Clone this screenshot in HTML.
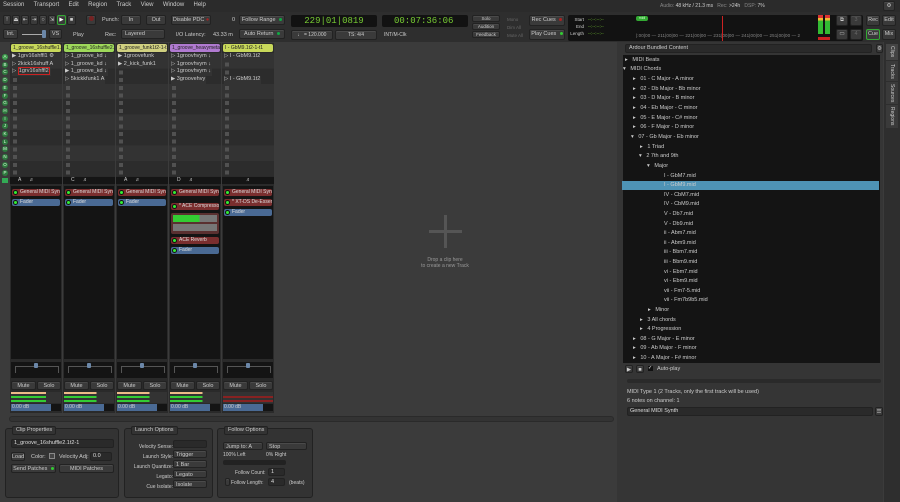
<!DOCTYPE html>
<html><head><meta charset="utf-8"><style>
*{margin:0;padding:0;box-sizing:border-box}
body{width:900px;height:502px;background:#3b3b3b;font-family:"Liberation Sans","DejaVu Sans",sans-serif;font-size:6px;color:#ccc;position:relative;overflow:hidden}
.a{position:absolute}
.btn{position:absolute;background:#3a3a3a;border:1px solid #222;border-radius:2px;color:#ccc;text-align:center;font-size:5.5px;line-height:8px;box-shadow:inset 0 1px 0 #4a4a4a;white-space:nowrap}
.led{display:inline-block;width:3px;height:3px;border-radius:50%;background:#1a4;margin-left:2px}
.clk{position:absolute;background:#121212;border-radius:2px;color:#7c3;font-family:"Liberation Mono",monospace}
.strip{position:absolute;top:43px;width:52px;height:370px;background:#2a2a2a}
.nm{position:absolute;left:1px;top:1px;width:50px;height:8px;border-radius:2px;font-size:5px;line-height:8px;color:#222;padding-left:2px;white-space:nowrap;overflow:hidden}
.cues{position:absolute;left:0;top:10px;width:52px;height:123px;background:repeating-linear-gradient(#333 0 15.4px,#2c2c2c 15.4px 30.8px)}
.cues:before{content:"";position:absolute;left:3px;top:0;width:4px;height:123px;background:repeating-linear-gradient(transparent 0 2px,#5a5a5a 2px 6px,transparent 6px 7.7px);opacity:.8}
.cue{position:absolute;left:2px;height:7.7px;font-size:5.5px;line-height:7.7px;color:#ccc;white-space:nowrap;background:inherit;z-index:1;padding-right:1px}
.pb{position:absolute;left:1px;top:143px;width:50px;height:173px;background:#141414}
.plug{position:absolute;left:1px;width:48px;height:7px;border-radius:2px;font-size:5px;line-height:7px;color:#ddd;padding-left:8px;white-space:nowrap;overflow:hidden}
.plug:before{content:"";position:absolute;left:2px;top:2px;width:3px;height:3px;border-radius:50%;background:#3e3;box-shadow:0 0 0 1px #111}
.red{background:#7a2e2e}.blu{background:#4a6a94}
.tree div{position:absolute;font-size:5.5px;color:#ccc;white-space:nowrap;height:9.65px;line-height:9.65px}
.panel{position:absolute;top:428px;height:70px;border:1px solid #222;border-radius:3px;background:#333}
.ptl{position:absolute;top:-3px;left:6px;background:#333;border:1px solid #222;border-radius:2px;padding:0 3px;font-size:5.5px;line-height:7px}
.lbl{position:absolute;font-size:5.5px;color:#ccc;white-space:nowrap}
.fld{position:absolute;background:#2a2a2a;border:1px solid #222;border-radius:2px;font-size:5.5px;line-height:7px;padding-left:2px;color:#ddd}
.cl{position:absolute;left:2px;width:6px;height:6px;border-radius:50%;background:#2f7a3f;color:#dfd;font-size:4.5px;line-height:6px;text-align:center}
.pan{position:absolute;top:362px;width:50px;height:16px;background:#141414}
.pan:before{content:"";position:absolute;left:4px;top:4px;width:42px;height:6px;border:1px solid #555;border-bottom:none}
.pan:after{content:"";position:absolute;left:23px;top:1px;width:4px;height:5px;background:#6b87a8;border-radius:1px}
</style></head><body>

<!-- menubar -->
<div class="a" style="left:0;top:0;width:900px;height:12px;background:#2b2b2b"></div>
<div class="a" style="left:3px;top:2px;font-size:6px;color:#ccc;word-spacing:3px">Session &nbsp;Transport &nbsp;Edit &nbsp;Region &nbsp;Track &nbsp;View &nbsp;Window &nbsp;Help</div>
<div class="a" style="left:660px;top:3px;font-size:5px;color:#888">Audio: <span style="color:#ccc">48 kHz / 21.3 ms</span> &nbsp; Rec: <span style="color:#ccc">&gt;24h</span> &nbsp; DSP: <span style="color:#ccc">7%</span></div>
<div class="btn" style="left:883px;top:1px;width:12px;height:10px">⚙</div>

<!-- toolbar -->
<div class="a" style="left:0;top:12px;width:900px;height:30px;background:#2e2e2e"></div>
<div class="btn" style="left:3px;top:15px;width:8px;height:10px">!</div>
<div class="btn" style="left:12px;top:15px;width:8px;height:10px">⏏</div>
<div class="btn" style="left:21px;top:15px;width:8px;height:10px">⇤</div>
<div class="btn" style="left:30px;top:15px;width:8px;height:10px">⇥</div>
<div class="btn" style="left:39px;top:15px;width:8px;height:10px">○</div>
<div class="btn" style="left:48px;top:15px;width:8px;height:10px">⇲</div>
<div class="btn" style="left:57px;top:15px;width:9px;height:10px;border-color:#3a3;color:#fff">▶</div>
<div class="btn" style="left:67px;top:15px;width:9px;height:10px">■</div>
<div class="btn" style="left:86px;top:15px;width:10px;height:10px"><span style="display:inline-block;width:5px;height:5px;border-radius:50%;background:#722"></span></div>
<div class="btn" style="left:3px;top:29px;width:15px;height:10px">Int.</div>
<div class="a" style="left:22px;top:34px;width:24px;height:1px;background:#aaa"></div>
<div class="a" style="left:42px;top:30px;width:4px;height:8px;background:#6b87a8;border-radius:1px"></div>
<div class="btn" style="left:49px;top:29px;width:13px;height:10px">VS</div>
<div class="lbl" style="left:73px;top:32px">Play</div>
<div class="lbl" style="left:102px;top:17px">Punch:</div>
<div class="btn" style="left:121px;top:15px;width:20px;height:10px">In</div>
<div class="btn" style="left:146px;top:15px;width:20px;height:10px">Out</div>
<div class="lbl" style="left:105px;top:32px">Rec:</div>
<div class="btn" style="left:121px;top:29px;width:44px;height:10px;text-align:left;padding-left:3px">Layered</div>
<div class="btn" style="left:171px;top:15px;width:40px;height:10px">Disable PDC <span style="color:#a22">●</span></div>
<div class="lbl" style="left:232px;top:17px">0</div>
<div class="lbl" style="left:176px;top:32px">I/O Latency:</div>
<div class="lbl" style="left:213px;top:32px">43.33 m</div>
<div class="btn" style="left:239px;top:15px;width:46px;height:10px">Follow Range <span class="led"></span></div>
<div class="btn" style="left:239px;top:29px;width:46px;height:10px">Auto Return <span class="led"></span></div>
<div class="clk" style="left:291px;top:15px;width:86px;height:12px;font-size:9px;line-height:12px;text-align:center">229|01|0819</div>
<div class="clk" style="left:382px;top:15px;width:86px;height:12px;font-size:9px;line-height:12px;padding-left:12px">00:07:36:06</div>
<div class="btn" style="left:291px;top:30px;width:42px;height:10px;font-size:5px">♩ = 120.000</div>
<div class="btn" style="left:335px;top:30px;width:42px;height:10px;font-size:5px">TS: 4/4</div>
<div class="lbl" style="left:384px;top:32px;font-size:5px">INT/M-Clk</div>
<div class="btn" style="left:472px;top:15px;width:28px;height:7px;font-size:4.5px;line-height:6px">Solo</div>
<div class="btn" style="left:472px;top:23px;width:28px;height:7px;font-size:4.5px;line-height:6px">Audition</div>
<div class="btn" style="left:472px;top:31px;width:28px;height:7px;font-size:4.5px;line-height:6px">Feedback</div>
<div class="lbl" style="left:507px;top:16px;color:#666;font-size:4.5px;line-height:8px">Mono<br>Dim All<br>Mute All</div>
<div class="btn" style="left:529px;top:15px;width:36px;height:11px">Rec Cues <span class="led" style="background:#a22"></span></div>
<div class="btn" style="left:529px;top:29px;width:36px;height:11px">Play Cues <span class="led" style="background:#3c3"></span></div>
<div class="a" style="left:568px;top:15px;width:112px;height:26px;background:#121212;border-radius:2px"></div>
<div class="lbl" style="left:570px;top:16px;font-size:4.5px;line-height:7px;text-align:right;width:14px">Start<br>End<br>Length</div>
<div class="lbl" style="left:588px;top:16px;font-size:4.5px;line-height:7px;color:#7c3">--:--:--:--<br>--:--:--:--<br>--:--:--:--</div>
<div class="a" style="left:633px;top:15px;width:230px;height:26px;background:#121212;border-radius:2px"></div>
<div class="a" style="left:636px;top:16px;width:12px;height:5px;background:#3a3;border-radius:2px;font-size:3.5px;color:#cfc;line-height:5px;text-align:center">midi</div>
<div class="lbl" style="left:636px;top:33px;font-size:4.5px;color:#888;letter-spacing:0.1px">|:00|00 — 211|00|00 — 221|00|00 — 231|00|00 — 241|00|00 — 251|00|00 — 2</div>
<div class="a" style="left:722px;top:16px;width:1px;height:25px;background:#c22"></div>
<div class="a" style="left:818px;top:15px;width:5px;height:19px;background:linear-gradient(#d33 0 15%,#eb3 15% 30%,#3b3 30%)"></div>
<div class="a" style="left:825px;top:15px;width:5px;height:19px;background:linear-gradient(#d33 0 15%,#eb3 15% 30%,#3b3 30%)"></div>
<div class="a" style="left:818px;top:37px;width:12px;height:3px;background:#c22"></div>
<div class="btn" style="left:836px;top:15px;width:12px;height:11px">⧉</div>
<div class="btn" style="left:850px;top:15px;width:12px;height:11px;color:#666">3</div>
<div class="btn" style="left:836px;top:29px;width:12px;height:11px">▭</div>
<div class="btn" style="left:850px;top:29px;width:12px;height:11px;color:#666">4</div>
<div class="btn" style="left:866px;top:15px;width:14px;height:11px">Rec</div>
<div class="btn" style="left:882px;top:15px;width:14px;height:11px">Edit</div>
<div class="btn" style="left:866px;top:29px;width:14px;height:11px;border-color:#3a3">Cue</div>
<div class="btn" style="left:882px;top:29px;width:14px;height:11px">Mix</div>

<!-- cue letters -->
<div class="cl" style="top:54px;background:#3c9a4c">A</div>
<div class="cl" style="top:61.7px">B</div>
<div class="cl" style="top:69.4px">C</div>
<div class="cl" style="top:77.1px">D</div>
<div class="cl" style="top:84.8px">E</div>
<div class="cl" style="top:92.5px">F</div>
<div class="cl" style="top:100.2px">G</div>
<div class="cl" style="top:107.9px">H</div>
<div class="cl" style="top:115.6px">I</div>
<div class="cl" style="top:123.3px">J</div>
<div class="cl" style="top:131px">K</div>
<div class="cl" style="top:138.7px">L</div>
<div class="cl" style="top:146.4px">M</div>
<div class="cl" style="top:154.1px">N</div>
<div class="cl" style="top:161.8px">O</div>
<div class="cl" style="top:169.5px">P</div>
<div class="a" style="left:2px;top:178px;width:6px;height:5px;background:#3a5"></div>

<!-- strips -->
<div class="strip" style="left:10px">
<div class="nm" style="background:#c8d85a">1_groove_16shuffle1.5</div>
<div class="cues"><div class="cue" style="top:0">▶ 1grv16shffl1 ⚙</div><div class="cue" style="top:7.7px">▷ 2kick16shuff A</div><div class="cue" style="top:15.4px">▷ <span style="border:1px solid #c22">1grv16shffl2</span></div></div>
<div class="a" style="left:0;top:134px;width:52px;height:7px;background:#151515;font-size:5px;line-height:7px;padding-left:8px">A &nbsp; &nbsp; &nbsp;♬</div>
<div class="pb"><div class="plug red" style="top:3px">General MIDI Synt</div><div class="plug blu" style="top:13px">Fader</div></div>
</div>
<div class="strip" style="left:63px">
<div class="nm" style="background:#9ed85a">1_groove_16shuffle2.1</div>
<div class="cues"><div class="cue" style="top:0">▷ 1_groove_kd ↓</div><div class="cue" style="top:7.7px">▷ 1_groove_kd ↓</div><div class="cue" style="top:15.4px">▶ 1_groove_kd ↓</div><div class="cue" style="top:23.1px">▷ 5kickkfunk1 A</div></div>
<div class="a" style="left:0;top:134px;width:52px;height:7px;background:#151515;font-size:5px;line-height:7px;padding-left:8px">C &nbsp; &nbsp; &nbsp;♬</div>
<div class="pb"><div class="plug red" style="top:3px">General MIDI Synt</div><div class="plug blu" style="top:13px">Fader</div></div>
</div>
<div class="strip" style="left:116px">
<div class="nm" style="background:#d0d080">1_groove_funk1t2-1-t1</div>
<div class="cues"><div class="cue" style="top:0">▶ 1groovefunk</div><div class="cue" style="top:7.7px">▶ 2_kick_funk1</div></div>
<div class="a" style="left:0;top:134px;width:52px;height:7px;background:#151515;font-size:5px;line-height:7px;padding-left:8px">A &nbsp; &nbsp; &nbsp;♬</div>
<div class="pb"><div class="plug red" style="top:3px">General MIDI Synt</div><div class="plug blu" style="top:13px">Fader</div></div>
</div>
<div class="strip" style="left:169px">
<div class="nm" style="background:#b07ad0">1_groove_heavymetal</div>
<div class="cues"><div class="cue" style="top:0">▷ 1groovhvym ↓</div><div class="cue" style="top:7.7px">▷ 1groovhvym ↓</div><div class="cue" style="top:15.4px">▷ 1groovhvym ↓</div><div class="cue" style="top:23.1px">▶ 3groovehvy</div></div>
<div class="a" style="left:0;top:134px;width:52px;height:7px;background:#151515;font-size:5px;line-height:7px;padding-left:8px">D &nbsp; &nbsp; &nbsp;♬</div>
<div class="pb"><div class="plug red" style="top:3px">General MIDI Synt</div><div class="plug red" style="top:17px">* ACE Compressor</div>
<div class="a" style="left:1px;top:27px;width:48px;height:21px;background:#5a3030;border-radius:2px"><div class="a" style="left:2px;top:2px;width:44px;height:7px;background:linear-gradient(90deg,#3c3 0 60%,#777 60%)"></div><div class="a" style="left:2px;top:11px;width:44px;height:7px;background:#777"></div></div>
<div class="plug red" style="top:51px">ACE Reverb</div><div class="plug blu" style="top:61px">Fader</div></div>
</div>
<div class="strip" style="left:222px">
<div class="nm" style="background:#c8d85a">I - GbM9.1t2-1-t1</div>
<div class="cues"><div class="cue" style="top:0">▷ I - GbM9.1t2</div><div class="cue" style="top:23.1px">▷ I - GbM9.1t2</div></div>
<div class="a" style="left:0;top:134px;width:52px;height:7px;background:#151515;font-size:5px;line-height:7px;padding-left:24px">♬</div>
<div class="pb"><div class="plug red" style="top:3px">General MIDI Synt</div><div class="plug red" style="top:13px">* XT-DS De-Esser</div><div class="plug blu" style="top:23px">Fader</div></div>
</div>

<!-- strip bottoms -->
<div class="pan" style="left:11px"></div><div class="pan" style="left:64px"></div><div class="pan" style="left:117px"></div><div class="pan" style="left:170px"></div><div class="pan" style="left:223px"></div>
<div class="btn" style="left:11px;top:381px;width:25px;height:9px">Mute</div><div class="btn" style="left:37px;top:381px;width:24px;height:9px">Solo</div>
<div class="btn" style="left:64px;top:381px;width:25px;height:9px">Mute</div><div class="btn" style="left:90px;top:381px;width:24px;height:9px">Solo</div>
<div class="btn" style="left:117px;top:381px;width:25px;height:9px">Mute</div><div class="btn" style="left:143px;top:381px;width:24px;height:9px">Solo</div>
<div class="btn" style="left:170px;top:381px;width:25px;height:9px">Mute</div><div class="btn" style="left:196px;top:381px;width:24px;height:9px">Solo</div>
<div class="btn" style="left:223px;top:381px;width:25px;height:9px">Mute</div><div class="btn" style="left:249px;top:381px;width:24px;height:9px">Solo</div>
<div class="a" style="left:11px;top:392px;width:50px;height:11px;background:linear-gradient(90deg,transparent 0 70%,#333 70%),linear-gradient(#eb8 0 2px,#333 2px 4px,#3c3 4px 6px,#333 6px 8px,#3c3 8px 10px,#333 10px)"></div>
<div class="a" style="left:64px;top:392px;width:50px;height:11px;background:linear-gradient(90deg,transparent 0 65%,#333 65%),linear-gradient(#eb8 0 2px,#333 2px 4px,#3c3 4px 6px,#333 6px 8px,#3c3 8px 10px,#333 10px)"></div>
<div class="a" style="left:117px;top:392px;width:50px;height:11px;background:linear-gradient(90deg,transparent 0 65%,#333 65%),linear-gradient(#eb8 0 2px,#333 2px 4px,#3c3 4px 6px,#333 6px 8px,#3c3 8px 10px,#333 10px)"></div>
<div class="a" style="left:170px;top:392px;width:50px;height:11px;background:linear-gradient(90deg,transparent 0 65%,#333 65%),linear-gradient(#eb8 0 2px,#333 2px 4px,#3c3 4px 6px,#333 6px 8px,#3c3 8px 10px,#333 10px)"></div>
<div class="a" style="left:223px;top:392px;width:50px;height:11px;background:linear-gradient(#333 0 4px,#822 4px 6px,#333 6px 8px,#822 8px 10px,#333 10px)"></div>
<div class="a" style="left:11px;top:404px;width:50px;height:7px;background:#141414"><div style="width:40px;height:7px;background:#4a6a94;font-size:5px;line-height:7px;padding-left:1px">0.00 dB</div></div>
<div class="a" style="left:64px;top:404px;width:50px;height:7px;background:#141414"><div style="width:40px;height:7px;background:#4a6a94;font-size:5px;line-height:7px;padding-left:1px">0.00 dB</div></div>
<div class="a" style="left:117px;top:404px;width:50px;height:7px;background:#141414"><div style="width:40px;height:7px;background:#4a6a94;font-size:5px;line-height:7px;padding-left:1px">0.00 dB</div></div>
<div class="a" style="left:170px;top:404px;width:50px;height:7px;background:#141414"><div style="width:40px;height:7px;background:#4a6a94;font-size:5px;line-height:7px;padding-left:1px">0.00 dB</div></div>
<div class="a" style="left:223px;top:404px;width:50px;height:7px;background:#141414"><div style="width:40px;height:7px;background:#4a6a94;font-size:5px;line-height:7px;padding-left:1px">0.00 dB</div></div>
<div class="a" style="left:9px;top:416px;width:605px;height:6px;background:#333;border:1px solid #2a2a2a;border-radius:3px"></div>

<!-- center drop area -->
<div class="a" style="left:444px;top:215px;width:3px;height:33px;background:#555"></div>
<div class="a" style="left:429px;top:230px;width:33px;height:3px;background:#555"></div>
<div class="a" style="left:405px;top:257px;width:80px;text-align:center;font-size:5px;color:#999;line-height:6px">Drop a clip here<br>to create a new Track</div>

<!-- right panel -->
<div class="a" style="left:617px;top:42px;width:266px;height:460px;background:#353535"></div>
<div class="a" style="left:625px;top:44px;width:247px;height:9px;background:#2a2a2a;border:1px solid #222;border-radius:2px;font-size:5.5px;line-height:7px;padding-left:3px;color:#ccc">Ardour Bundled Content</div>
<div class="btn" style="left:876px;top:44px;width:7px;height:9px">⚙</div>
<div class="a" style="left:623px;top:55px;width:257px;height:308px;background:#141414"></div>
<div class="a" style="left:622px;top:181px;width:257px;height:9px;background:#4e93b5"></div>
<div class="tree">
<div style="left:625px;top:55.5px">▸ &nbsp; MIDI Beats</div>
<div style="left:623px;top:65px">▾ &nbsp; MIDI Chords</div>
<div style="left:633px;top:75px">▸ &nbsp; 01 - C Major - A minor</div>
<div style="left:633px;top:84.5px">▸ &nbsp; 02 - Db Major - Bb minor</div>
<div style="left:633px;top:94px">▸ &nbsp; 03 - D Major - B minor</div>
<div style="left:633px;top:104px">▸ &nbsp; 04 - Eb Major - C minor</div>
<div style="left:633px;top:113.5px">▸ &nbsp; 05 - E Major - C# minor</div>
<div style="left:633px;top:123px">▸ &nbsp; 06 - F Major - D minor</div>
<div style="left:631px;top:133px">▾ &nbsp; 07 - Gb Major - Eb minor</div>
<div style="left:640px;top:142.5px">▸ &nbsp; 1 Triad</div>
<div style="left:639px;top:152px">▾ &nbsp; 2 7th and 9th</div>
<div style="left:647px;top:162px">▾ &nbsp; Major</div>
<div style="left:664px;top:171.5px">I - GbM7.mid</div>
<div style="left:664px;top:181px">I - GbM9.mid</div>
<div style="left:664px;top:190.5px">IV - CbM7.mid</div>
<div style="left:664px;top:200px">IV - CbM9.mid</div>
<div style="left:664px;top:210px">V - Db7.mid</div>
<div style="left:664px;top:219.5px">V - Db9.mid</div>
<div style="left:664px;top:229px">ii - Abm7.mid</div>
<div style="left:664px;top:238.5px">ii - Abm9.mid</div>
<div style="left:664px;top:248px">iii - Bbm7.mid</div>
<div style="left:664px;top:258px">iii - Bbm9.mid</div>
<div style="left:664px;top:267.5px">vi - Ebm7.mid</div>
<div style="left:664px;top:277px">vi - Ebm9.mid</div>
<div style="left:664px;top:286.5px">vii - Fm7-5.mid</div>
<div style="left:664px;top:296px">vii - Fm7b9b5.mid</div>
<div style="left:648px;top:306px">▸ &nbsp; Minor</div>
<div style="left:640px;top:315.5px">▸ &nbsp; 3 All chords</div>
<div style="left:640px;top:325px">▸ &nbsp; 4 Progression</div>
<div style="left:633px;top:334.5px">▸ &nbsp; 08 - G Major - E minor</div>
<div style="left:633px;top:344px">▸ &nbsp; 09 - Ab Major - F minor</div>
<div style="left:633px;top:353.5px">▸ &nbsp; 10 - A Major - F# minor</div>
</div>
<div class="btn" style="left:625px;top:365px;width:8px;height:8px">▶</div>
<div class="btn" style="left:636px;top:365px;width:8px;height:8px">■</div>
<div class="a" style="left:648px;top:366px;width:5px;height:5px;background:#111;color:#fff;font-size:5px;line-height:5px">✓</div>
<div class="lbl" style="left:657px;top:366px">Auto-play</div>
<div class="a" style="left:627px;top:379px;width:254px;height:4px;background:#2a2a2a;border-radius:2px"></div>
<div class="lbl" style="left:627px;top:389px">MIDI Type 1 (2 Tracks, only the first track will be used)</div>
<div class="lbl" style="left:627px;top:398px">6 notes on channel: 1</div>
<div class="fld" style="left:627px;top:407px;width:246px;height:9px">General MIDI Synth</div>
<div class="btn" style="left:875px;top:407px;width:8px;height:9px">☰</div>
<!-- side tabs -->
<div class="a" style="left:884px;top:42px;width:16px;height:460px;background:#2e2e2e"></div>
<div class="a" style="left:886px;top:44px;width:12px;height:16px;background:#444;font-size:5px;writing-mode:vertical-rl;line-height:12px;text-align:center">Clips</div>
<div class="a" style="left:886px;top:61px;width:12px;height:20px;background:#3a3a3a;font-size:5px;writing-mode:vertical-rl;line-height:12px;text-align:center">Tracks</div>
<div class="a" style="left:886px;top:82px;width:12px;height:22px;background:#3a3a3a;font-size:5px;writing-mode:vertical-rl;line-height:12px;text-align:center">Sources</div>
<div class="a" style="left:886px;top:105px;width:12px;height:23px;background:#3a3a3a;font-size:5px;writing-mode:vertical-rl;line-height:12px;text-align:center">Regions</div>

<!-- bottom panels -->
<div class="panel" style="left:5px;width:114px">
<div class="ptl">Clip Properties</div>
<div class="fld" style="left:5px;top:10px;width:103px;height:9px">1_groove_16shuffle2.1t2-1</div>
<div class="btn" style="left:5px;top:23px;width:14px;height:9px">Load</div>
<div class="lbl" style="left:25px;top:25px">Color:</div>
<div class="a" style="left:43px;top:24px;width:6px;height:6px;border:1px solid #888;background:#444"></div>
<div class="lbl" style="left:53px;top:25px">Velocity Adj:</div>
<div class="fld" style="left:84px;top:23px;width:22px;height:9px">0.0</div>
<div class="btn" style="left:5px;top:35px;width:45px;height:9px">Send Patches <span class="led" style="background:#3c3"></span></div>
<div class="btn" style="left:53px;top:35px;width:55px;height:9px">MIDI Patches</div>
</div>
<div class="panel" style="left:124px;width:89px">
<div class="ptl">Launch Options</div>
<div class="lbl" style="left:8px;top:13px;width:40px;text-align:right;font-size:5px;line-height:10px">Velocity Sense:<br>Launch Style:<br>Launch Quantize:<br>Legato:<br>Cue Isolate:</div>
<div class="fld" style="left:48px;top:11px;width:34px;height:8px"></div>
<div class="btn" style="left:48px;top:21px;width:34px;height:8px;text-align:left;padding-left:2px">Trigger</div>
<div class="btn" style="left:48px;top:31px;width:34px;height:8px;text-align:left;padding-left:2px">1 Bar</div>
<div class="btn" style="left:48px;top:41px;width:34px;height:8px;text-align:left;padding-left:2px">Legato</div>
<div class="btn" style="left:48px;top:51px;width:34px;height:8px;text-align:left;padding-left:2px">Isolate</div>
</div>
<div class="panel" style="left:217px;width:96px">
<div class="ptl">Follow Options</div>
<div class="btn" style="left:5px;top:13px;width:40px;height:8px;text-align:left;padding-left:2px">Jump to: A</div>
<div class="btn" style="left:48px;top:13px;width:41px;height:8px;text-align:left;padding-left:2px">Stop</div>
<div class="lbl" style="left:5px;top:23px;font-size:5px">100% Left</div>
<div class="lbl" style="left:48px;top:23px;font-size:5px">0% Right</div>
<div class="a" style="left:5px;top:31px;width:63px;height:5px;background:#222;border-radius:2px"></div>
<div class="lbl" style="left:17px;top:41px;font-size:5px">Follow Count:</div>
<div class="fld" style="left:50px;top:39px;width:17px;height:8px">1</div>
<div class="btn" style="left:7px;top:49px;width:5px;height:8px"></div>
<div class="lbl" style="left:13px;top:51px;font-size:5px">Follow Length:</div>
<div class="fld" style="left:50px;top:49px;width:17px;height:8px">4</div>
<div class="lbl" style="left:71px;top:51px;font-size:5px">(beats)</div>
</div>
</body></html>
